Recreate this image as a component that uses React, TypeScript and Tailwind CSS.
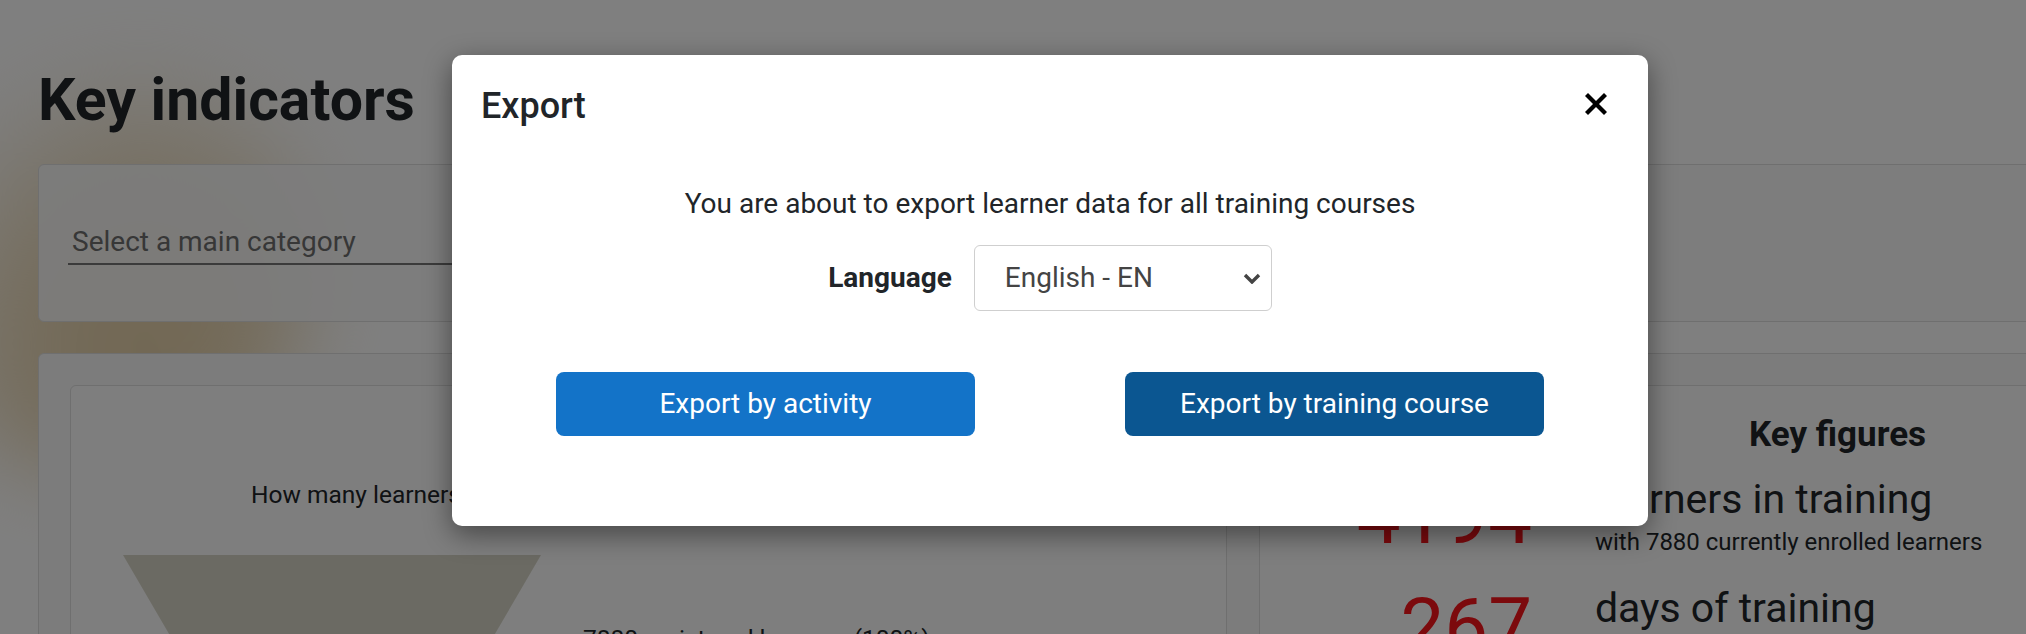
import React from "react";

// Dimmed dashboard in the back, export dialog on top
const ExportModal: React.FC = () => {
  return (
    <div className="absolute left-[452px] top-[55px] w-[1196px] rounded-[10px] bg-white shadow-[0_8px_28px_rgba(0,0,0,0.45)]">
      {/* Header */}
      <div className="flex items-center justify-between pl-[29px] pr-[40px] pt-[25px]">
        <h5 className="text-[36px] font-medium leading-[52px] text-[#212529]">Export</h5>
        <button className="-mt-[4px] flex h-[24px] w-[24px] items-center justify-center" aria-label="Close">
          <svg width="22" height="22" viewBox="0 0 22 22">
            <line x1="3" y1="3" x2="19" y2="19" stroke="#000" strokeWidth="4.2" strokeLinecap="square" />
            <line x1="19" y1="3" x2="3" y2="19" stroke="#000" strokeWidth="4.2" strokeLinecap="square" />
          </svg>
        </button>
      </div>

      {/* Body */}
      <div className="flex flex-col items-center pt-[51px] text-[28px] leading-[1.5] text-[#212529]">
        <p>You are about to export learner data for all training courses</p>
        <div className="mt-[20px] flex items-center gap-[22px]">
          <span className="font-bold">Language</span>
          <div className="flex h-[66px] w-[298px] items-center justify-between rounded-[6px] border border-[#cfcfcf] pl-[30px] pr-[10px] text-[#444]">
            <span>English - EN</span>
            <svg width="18" height="11" viewBox="0 0 18 11">
              <polyline points="2,2 9,9 16,2" fill="none" stroke="#444" strokeWidth="3.4" />
            </svg>
          </div>
        </div>
      </div>

      {/* Actions */}
      <div className="flex justify-between px-[104px] pb-[90px] pt-[61px]">
        <button className="h-[64px] w-[419px] rounded-[8px] bg-[#1373c8] text-[28px] text-white">
          Export by activity
        </button>
        <button className="h-[64px] w-[419px] rounded-[8px] bg-[#0b5691] text-[28px] text-white">
          Export by training course
        </button>
      </div>
    </div>
  );
};

const KeyFigure: React.FC<{ value: string; label: string; sub: string }> = ({ value, label, sub }) => (
  <div className="flex items-center gap-[63px]">
    <div className="w-[272px] text-right text-[78px] leading-none text-[#f8141a]">{value}</div>
    <div>
      <div className="text-[41px] leading-[1.2]">{label}</div>
      <div className="text-[24px] leading-[1.5]">{sub}</div>
    </div>
  </div>
);

export default function App() {
  return (
    <div className="relative h-[634px] w-[2026px] overflow-hidden bg-white font-['Roboto',sans-serif] text-[#212529]">
      {/* blurred photo behind the page */}
      <div className="pointer-events-none absolute -left-[120px] top-[40px] h-[440px] w-[440px] rounded-full bg-[radial-gradient(ellipse_at_60%_70%,#e2cca2_0%,#ecdcbd_35%,rgba(255,255,255,0)_70%)] blur-2xl" />

      <div className="relative w-[2486px] px-[38px] pt-[65px]">
        <h1 className="text-[59px] font-bold leading-[1.2] text-[#212529]">Key indicators</h1>

        {/* Filters */}
        <div className="mt-[28px] rounded-[6px] border border-[#dedede] bg-[#fafafa]/90 px-[29px] py-[56px]">
          <div className="h-[44px] w-[740px] border-b-2 border-[#777] pl-[4px] text-[28px] leading-[1.5] text-[#6f6f6f]">
            Select a main category
          </div>
        </div>

        {/* Charts */}
        <div className="mt-[31px] h-[400px] rounded-[6px] border border-[#dedede] bg-[#f9f9f9] p-[31px]">
          <div className="flex h-full gap-[32px]">
            <div className="w-[1158px] rounded-[6px] border border-[#dedede] bg-[#fdfdfd] pt-[91px]">
              <p className="pl-[180px] text-[24.5px] leading-[1.5]">
                How many learners started their training courses?
              </p>
              <div className="mt-[41px] flex pl-[52px]">
                <svg width="418" height="300" viewBox="0 0 418 300">
                  <polygon points="0,0 418,0 243,300 175,300" fill="#d7d5c7" />
                </svg>
                <div className="pl-[42px] pt-[66px] text-[24.5px] leading-[1.5]">
                  7880 registered learners (100%)
                </div>
              </div>
            </div>

            <div className="w-[1158px] rounded-[6px] border border-[#dedede] bg-[#fdfdfd] pt-[28px]">
              <h3 className="text-center text-[35px] font-bold leading-[1.2]">Key figures</h3>
              <div className="mt-[19px] flex flex-col gap-[24px]">
                <KeyFigure value="4194" label="learners in training" sub="with 7880 currently enrolled learners" />
                <KeyFigure value="267" label="days of training" sub="spent by all learners" />
              </div>
            </div>
          </div>
        </div>
      </div>

      {/* backdrop */}
      <div className="absolute inset-0 bg-black/50" />

      <ExportModal />
    </div>
  );
}
